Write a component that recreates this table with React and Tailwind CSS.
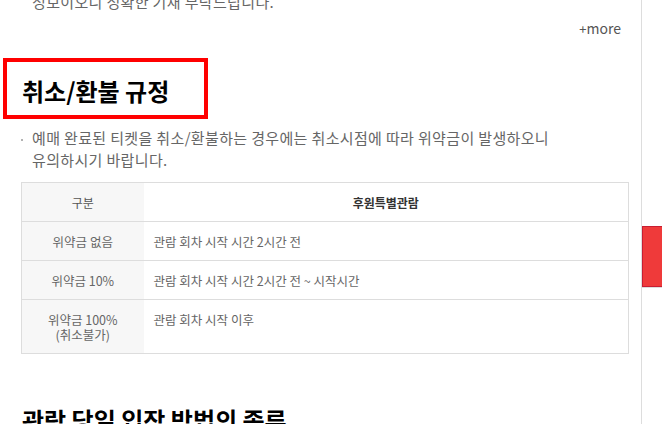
import React from 'react'

const font = { fontFamily: '"Noto Sans CJK KR", "Noto Sans", sans-serif' }

const rows = [
  { label: ['위약금 없음'], desc: '관람 회차 시작 시간 2시간 전' },
  { label: ['위약금 10%'], desc: '관람 회차 시작 시간 2시간 전 ~ 시작시간' },
  { label: ['위약금 100%', '(취소불가)'], desc: '관람 회차 시작 이후' },
]

export default function App() {
  return (
    <div className="flex h-[424px] w-[662px] overflow-hidden bg-white" style={font}>
      {/* Main content */}
      <main className="w-[642px] shrink-0 border-r border-[#dddddd]">
        <p className="mt-[-9px] pl-[32px] text-[15px] leading-[22px] tracking-[0.35px] text-[#666666]">
          정보이오니 정확한 기재 부탁드립니다.
        </p>

        <div className="mt-[5px] flex justify-end pr-[20px]">
          <span className="text-[14px] leading-[20px] text-[#555555]">
            <span className="text-[13px]">+</span>more
          </span>
        </div>

        <div className="relative mt-[37px] pl-[22px]">
          <div className="absolute left-[3px] top-[-18px] h-[61px] w-[205px] border-4 border-[#ff0000]" />
          <h2 className="text-[24px] font-bold leading-[30px] text-black">취소/환불 규정</h2>
        </div>

        <div className="relative mt-[21px] pl-[32px] text-[15px] leading-[22px] tracking-[0.35px] text-[#666666]">
          <span className="absolute left-[21px] top-[12px] h-[2px] w-[2px] rounded-full bg-[#999999]" />
          <p>예매 완료된 티켓을 취소/환불하는 경우에는 취소시점에 따라 위약금이 발생하오니</p>
          <p>유의하시기 바랍니다.</p>
        </div>

        <table className="ml-[21px] mt-[11px] w-[608px] table-fixed border-collapse border border-[#dddddd] text-[12.5px] leading-[15px] text-[#666666]">
          <colgroup>
            <col className="w-[122px]" />
            <col />
          </colgroup>
          <thead>
            <tr>
              <th className="h-[39px] border-b border-[#dddddd] bg-[#f7f7f7] text-[12px] font-normal text-[#555555]">구분</th>
              <th className="h-[39px] border-b border-[#dddddd] bg-white text-[12px] font-bold text-[#333333]">후원특별관람</th>
            </tr>
          </thead>
          <tbody>
            {rows.map((r) => (
              <tr key={r.desc} className="border-b border-[#dddddd]">
                <td className="bg-[#f7f7f7] px-[10px] pb-[11px] pt-[12px] text-center align-top">
                  {r.label.map((l) => (
                    <div key={l}>{l}</div>
                  ))}
                </td>
                <td className="px-[10px] pb-[11px] pt-[12px] align-top">{r.desc}</td>
              </tr>
            ))}
          </tbody>
        </table>

        <h2 className="mt-[51px] pl-[22px] text-[24px] font-bold leading-[30px] text-black">
          관람 당일 입장 방법의 종류
        </h2>
      </main>

      {/* Right rail */}
      <aside className="flex-1">
        <div className="mt-[226px] h-[61px] w-full border border-r-0 border-[#c81e32] bg-[#ef3a3a] shadow-[0_1px_0_#dddddd]" />
      </aside>
    </div>
  )
}
